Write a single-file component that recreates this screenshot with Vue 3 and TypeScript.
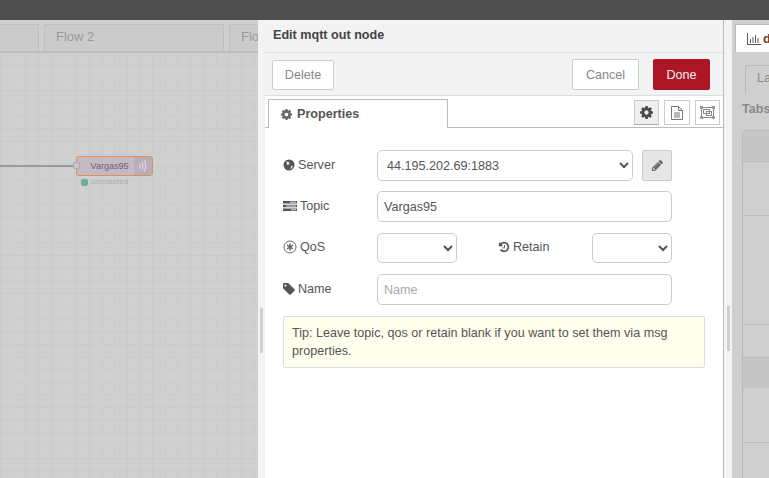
<script setup lang="ts">
const cog = "M1152 896q0-106-75-181t-181-75-181 75-75 181 75 181 181 75 181-75 75-181zm512-109v222q0 12-8 23t-20 13l-185 28q-19 54-39 91 35 50 107 138 10 12 10 25t-9 23q-27 37-99 108t-94 71q-12 0-26-9l-138-108q-44 23-91 38-16 136-29 186-7 28-36 28h-222q-14 0-24.5-8.5t-11.5-21.5l-28-184q-49-16-90-37l-141 107q-10 9-25 9-14 0-25-11-126-114-165-168-7-10-7-23 0-12 8-23 15-21 51-66.5t54-70.5q-27-50-41-99l-183-27q-13-2-21-12.5t-8-23.5v-222q0-12 8-23t19-13l186-28q14-46 39-92-40-57-107-138-10-12-10-24 0-10 9-23 26-36 98.5-107.5t94.5-71.5q13 0 26 10l138 107q44-23 91-38 16-136 29-186 7-28 36-28h222q14 0 24.5 8.5t11.5 21.5l28 184q49 16 90 37l142-107q9-9 24-9 13 0 25 10 129 119 165 170 7 8 7 22 0 12-8 23-15 21-51 66.5t-54 70.5q26 50 41 98l183 28q13 2 21 12.5t8 23.5z"
const pencil = "M491 1536l91-91-235-235-91 91v107h128v128h107zm523-928q0-22-22-22-10 0-17 7l-542 542q-7 7-7 17 0 22 22 22 10 0 17-7l542-542q7-7 7-17zm-54-192l416 416-832 832h-416v-416zm683 96q0 53-37 90l-166 166-416-416 166-165q36-38 90-38 53 0 91 38l235 234q37 39 37 91z"
const tag = "M576 448q0-53-37.5-90.5t-90.5-37.5-90.5 37.5-37.5 90.5 37.5 90.5 90.5 37.5 90.5-37.5 37.5-90.5zm1067 576q0 53-37 90l-491 492q-39 37-91 37-53 0-90-37l-715-716q-38-37-64.5-101t-26.5-117v-416q0-52 38-90t90-38h416q53 0 117 26.5t102 64.5l715 714q37 39 37 91z"
const history = "M1664 896q0 156-61 298t-164 245-245 164-298 61q-172 0-327-72.5t-264-204.5q-7-10-6.5-22.5t8.5-20.5l137-138q10-9 25-9 16 2 23 12 73 95 179 147t225 52q104 0 198.5-40.5t163.5-109.5 109.5-163.5 40.5-198.5-40.5-198.5-109.5-163.5-163.5-109.5-198.5-40.5q-98 0-188 35.5t-160 101.5l137 138q31 30 14 69-17 40-59 40h-448q-26 0-45-19t-19-45v-448q0-42 40-59 39-17 69 14l130 129q107-101 244.5-156.5t284.5-55.5q156 0 298 61t245 164 164 245 61 298zm-640-288v448q0 14-9 23t-23 9h-320q-14 0-23-9t-9-23v-64q0-14 9-23t23-9h224v-352q0-14 9-23t23-9h64q14 0 23 9t9 23z"
</script>

<template>
  <div class="page">
    <div class="topbar"></div>
    <div class="main">
      <section class="workspace">
        <div class="flow-tabs">
          <div class="flow-tab first"></div>
          <div class="flow-tab second">Flow 2</div>
          <div class="flow-tab third">Flo</div>
        </div>
        <div class="canvas">
          <div class="wire"></div>
          <div class="node">
            <span class="port"></span>
            <span class="node-label">Vargas95</span>
            <span class="node-icon">
              <svg width="10" height="16" viewBox="0 0 10 16" fill="none" stroke="#e6e0e6" stroke-width="1">
                <path d="M1.5 5.5q1.5 2.5 0 5M3.8 3.8q2.6 4.2 0 8.4M6 2q3.6 6 0 12" />
              </svg>
            </span>
          </div>
          <div class="node-status">
            <span class="status-dot"></span>
            <span>connected</span>
          </div>
        </div>
      </section>

      <section class="tray">
        <div class="tray-strip left"><span class="grip"></span></div>
        <div class="tray-body">
          <header class="tray-title">Edit mqtt out node</header>
          <div class="tray-actions">
            <button class="btn delete">Delete</button>
            <span class="spacer"></span>
            <button class="btn cancel">Cancel</button>
            <button class="btn done">Done</button>
          </div>
          <div class="tray-tabs">
            <div class="tab">
              <svg class="ic" width="13" height="13" viewBox="0 0 1792 1792" fill="#666"><path :d="cog" /></svg>
              Properties
            </div>
            <span class="spacer"></span>
            <div class="tool active">
              <svg width="15" height="15" viewBox="0 0 1792 1792" fill="#4a4a4a"><path :d="cog" /></svg>
            </div>
            <div class="tool wide">
              <svg width="12" height="14" viewBox="0 0 12 14" fill="none" stroke="#777" stroke-width="1">
                <path d="M.5.5h7l4 4v9h-11zM7.5.5v4h4M3 7h6M3 9h6M3 11h6" />
              </svg>
            </div>
            <div class="tool">
              <svg width="15" height="13" viewBox="0 0 15 13" fill="none" stroke="#8a8a8a" stroke-width="1">
                <rect x="1.5" y="1.5" width="12" height="10" />
                <rect x="3.500" y="3.500" width="6" height="4" />
                <rect x="6.500" y="5.500" width="5" height="4" />
                <path d="M0 0h3v3h-3zM12 0h3v3h-3zM0 10h3v3h-3zM12 10h3v3h-3z" fill="#999" stroke="none" />
              </svg>
            </div>
          </div>

          <div class="form">
            <div class="row server">
              <label>
                <svg width="12" height="12" viewBox="0 0 12 12"><circle cx="6" cy="6" r="5.5" fill="#555" /><path d="M3 2.5l3 .5.5 2-2 1.500zM8 7l2-.5-1 3-1.500.5z" fill="#ddd" /></svg>
                Server
              </label>
              <select class="field grow"><option>44.195.202.69:1883</option></select>
              <button class="edit">
                <svg width="13" height="13" viewBox="0 0 1792 1792" fill="#666"><path :d="pencil" /></svg>
              </button>
            </div>
            <div class="row topic">
              <label>
                <svg width="14" height="10" viewBox="0 0 14 10" fill="#555"><path d="M0 0h14v2.600h-14zM0 3.700h14v2.600h-14zM0 7.400h14v2.600h-14z" /><path d="M7 .8h6v1h-6zM3 4.500h10v1h-10zM8 8.200h5v1h-5z" fill="#ddd" /></svg>
                Topic
              </label>
              <input class="field grow" value="Vargas95" />
            </div>
            <div class="row qos">
              <label>
                <svg width="14" height="14" viewBox="0 0 14 14" fill="none" stroke="#666"><circle cx="7" cy="7" r="6" /><path d="M7 3.500v7M4 5.200l6 3.600M10 5.200l-6 3.600" stroke-width="1.500" /></svg>
                QoS
              </label>
              <select class="field short"><option></option></select>
              <label class="retain">
                <svg width="12" height="12" viewBox="0 0 1792 1792" fill="#555"><path :d="history" /></svg>
                Retain
              </label>
              <select class="field short"><option></option></select>
            </div>
            <div class="row name">
              <label>
                <svg width="12" height="12" viewBox="128 128 1536 1536" fill="#555"><path :d="tag" /></svg>
                Name
              </label>
              <input class="field grow" placeholder="Name" />
            </div>
            <div class="tip">Tip: Leave topic, qos or retain blank if you want to set them via msg properties.</div>
          </div>
        </div>
        <div class="tray-strip right"><span class="grip"></span></div>
      </section>

      <aside class="sidebar">
        <div class="side-tabs">
          <div class="side-tab">
            <svg width="14" height="12" viewBox="0 0 14 12" fill="none" stroke="#555"><path d="M.5 0v11.500h13.500M3.500 10v-4M6 10v-6M8.500 10v-8M11 10v-5" /></svg>
            <span class="side-d">d</span>
          </div>
        </div>
        <div class="side-subtabs"><div class="side-subtab">La</div></div>
        <div class="side-label">Tabs</div>
        <div class="side-list">
          <div class="band head"></div>
          <div class="item one"></div>
          <div class="item two"></div>
          <div class="item three"></div>
          <div class="item four"><div class="band"></div></div>
          <div class="item five"></div>
        </div>
      </aside>
    </div>
  </div>
</template>

<style>
body {
  margin: 0;
  overflow: hidden;
}
</style>

<style scoped>
.page {
  width: 769px;
  height: 478px;
  display: flex;
  flex-direction: column;
  overflow: hidden;
  font-family: "Liberation Sans", Arial, sans-serif;
  font-size: 12.6px;
  color: #555;
}
.topbar {
  height: 20px;
  flex: none;
  background: #4f4f4f;
}
.main {
  flex: 1;
  display: flex;
  min-height: 0;
}
.spacer {
  flex: 1;
}

/* dimmed workspace */
.workspace {
  width: 258px;
  flex: none;
  display: flex;
  flex-direction: column;
  background: #d0d0d0;
}
.flow-tabs {
  height: 33px;
  flex: none;
  display: flex;
  gap: 5px;
  padding-top: 4px;
  box-sizing: border-box;
  border-bottom: 2px solid #bdbdbd;
  overflow: hidden;
  background: #cfcfcf;
}
.flow-tab {
  flex: none;
  height: 28px;
  box-sizing: border-box;
  padding: 2px 11px;
  border: 1px solid #bfbfbf;
  border-bottom: none;
  background: #cbcbcb;
  color: #999;
  font-size: 13px;
  line-height: 20px;
  white-space: nowrap;
}
.flow-tab.first {
  width: 39px;
  border-left: none;
}
.flow-tab.second {
  width: 180px;
}
.flow-tab.third {
  width: 60px;
}
.canvas {
  flex: 1;
  position: relative;
  background-color: #d0d0d0;
  background-image:
    linear-gradient(#cacaca 1px, transparent 1px),
    linear-gradient(90deg, #cacaca 1px, transparent 1px);
  background-size: 12.7px 12.7px;
  background-position: 0 -1px;
}
.wire {
  position: absolute;
  left: 0;
  top: 112px;
  width: 76px;
  height: 2px;
  background: #9b9b9b;
}
.node {
  position: absolute;
  left: 76px;
  top: 103px;
  width: 77px;
  height: 20px;
  box-sizing: border-box;
  display: flex;
  border: 1px solid #dc9350;
  border-radius: 3px;
  background: #c5b8c7;
  font-size: 9px;
  color: #666;
}
.port {
  position: absolute;
  left: -4px;
  top: 5px;
  width: 7px;
  height: 7px;
  box-sizing: border-box;
  border: 1px solid #aaa;
  border-radius: 2px;
  background: #c8c8c8;
}
.node-label {
  flex: 1;
  text-align: center;
  line-height: 18px;
  padding-left: 8px;
}
.node-icon {
  width: 18px;
  display: flex;
  align-items: center;
  justify-content: center;
  background: #b9acbb;
  border-radius: 0 2px 2px 0;
}
.node-status {
  position: absolute;
  left: 81px;
  top: 124px;
  display: flex;
  align-items: center;
  gap: 3px;
  font-size: 8px;
  line-height: 10px;
  color: #aaa;
}
.status-dot {
  width: 7px;
  height: 7px;
  border-radius: 2px;
  background: #6fae98;
}

/* edit tray */
.tray {
  width: 474px;
  flex: none;
  display: flex;
}
.tray-strip {
  background: #f3f3f3;
  display: flex;
  align-items: flex-start;
  justify-content: center;
}
.tray-strip.left {
  width: 7px;
}
.tray-strip.right {
  width: 8px;
}
.grip {
  width: 3px;
  height: 45px;
  margin-top: 288px;
  background: #d0d0d0;
}
.tray-strip.right .grip {
  margin-top: 286px;
}
.tray-body {
  flex: 1;
  display: flex;
  flex-direction: column;
  background: #fff;
  border-right: 1px solid #bbb;
}
.tray-title {
  height: 33px;
  flex: none;
  box-sizing: border-box;
  padding: 7px 8px 0;
  background: #f3f3f3;
  border-bottom: 1px solid #ddd;
  font-size: 12.6px;
  font-weight: 700;
  color: #444;
  line-height: 17px;
}
.tray-actions {
  height: 43px;
  flex: none;
  box-sizing: border-box;
  display: flex;
  align-items: flex-start;
  padding: 6px 13px 0 6px;
  background: #f3f3f3;
  border-bottom: 1px solid #ddd;
}
.btn {
  height: 31px;
  box-sizing: border-box;
  font: inherit;
  border: 1px solid #ccc;
  background: #fff;
  color: #888;
  border-radius: 2px;
  padding: 0;
}
.btn.delete {
  width: 62px;
  margin: 1px 0 0 1px;
  height: 30px;
}
.btn.cancel {
  width: 67px;
}
.btn.done {
  width: 57px;
  margin-left: 14px;
  background: #ad1625;
  border-color: #ad1625;
  color: #eee;
  font-weight: 400;
}
.tray-tabs {
  height: 32px;
  flex: none;
  box-sizing: border-box;
  display: flex;
  align-items: flex-start;
  gap: 5px;
  padding: 3px 3px 0;
  border-bottom: 1px solid #bbb;
  position: relative;
}
.tab {
  width: 180px;
  height: 29px;
  box-sizing: border-box;
  flex: none;
  padding-left: 11px;
  display: flex;
  align-items: center;
  gap: 4px;
  border: 1px solid #bbb;
  border-bottom: none;
  background: #fff;
  font-weight: 700;
  font-size: 12.6px;
  color: #555;
}
.tool {
  width: 25px;
  height: 25px;
  margin-top: 1px;
  flex: none;
  box-sizing: border-box;
  display: flex;
  align-items: center;
  justify-content: center;
  border: 1px solid #ccc;
  background: #fff;
}
.tool.wide {
  width: 26px;
}
.tool.active {
  background: #efefef;
  border-bottom-color: #aaa;
}
.form {
  padding: 22px 18px 0;
  display: flex;
  flex-direction: column;
}
.row {
  display: flex;
  align-items: center;
  width: 389px;
  margin-bottom: 11px;
}
.row.server {
  margin-bottom: 10px;
}
.row label {
  width: 94px;
  flex: none;
  display: flex;
  align-items: center;
  gap: 3px;
  margin-bottom: 2px;
  color: #555;
}
.field {
  box-sizing: border-box;
  height: 31px;
  border: 1px solid #ccc;
  border-radius: 5px;
  background: #fff;
  font: inherit;
  color: #555;
  padding: 0 6px;
  outline: none;
}
.field::placeholder {
  color: #aaa;
}
.grow {
  flex: 1;
  min-width: 0;
}
select.field {
  padding: 0 5px;
}
.short {
  width: 80px;
  flex: none;
  height: 30px;
}
.row .retain {
  width: 94px;
  margin-left: 41px;
  flex: none;
}
.edit {
  width: 30px;
  height: 31px;
  flex: none;
  margin-left: 9px;
  padding: 0;
  display: flex;
  align-items: center;
  justify-content: center;
  box-sizing: border-box;
  background: #e6e6e6;
  border: 1px solid #ccc;
  border-radius: 2px;
}
.tip {
  width: 422px;
  box-sizing: border-box;
  padding: 7px 8px 7px;
  background: #ffe;
  border: 1px solid #ddd;
  border-radius: 2px;
  line-height: 18px;
  color: #555;
}

/* dimmed sidebar */
.sidebar {
  flex: 1;
  min-width: 0;
  background: #cfcfcf;
  overflow: hidden;
  color: #8a8a8a;
}
.side-tabs {
  height: 32px;
  box-sizing: border-box;
  padding: 4px 0 0 3px;
}
.side-tab {
  height: 28px;
  box-sizing: border-box;
  width: 60px;
  padding: 0 4px 0 11px;
  display: flex;
  align-items: center;
  gap: 2px;
  background: #fff;
  border: 1px solid #bbb;
  border-bottom: none;
  font-weight: 700;
}
.side-d {
  color: #6b3a2a;
}
.side-subtabs {
  height: 41px;
  padding: 13px 0 0 13px;
  box-sizing: border-box;
}
.side-subtab {
  width: 60px;
  height: 28px;
  box-sizing: border-box;
  padding: 5px 11px;
  border: 1px solid #b8b8b8;
  border-bottom: none;
  border-radius: 3px 0 0 0;
  white-space: nowrap;
}
.side-label {
  height: 37px;
  padding: 9px 0 0 10px;
  box-sizing: border-box;
  font-weight: 700;
}
.side-list {
  margin-left: 10px;
  width: 60px;
  box-sizing: border-box;
  border: 1px solid #bbb;
  border-radius: 4px 0 0 0;
}
.band {
  height: 30px;
  background: #c6c6c6;
}
.item {
  border-top: 1px solid #bbb;
  box-sizing: border-box;
}
.item.one {
  height: 54px;
}
.item.two {
  height: 109px;
}
.item.three {
  height: 33px;
}
.item.four {
  height: 85px;
}
.item.five {
  height: 40px;
}
</style>
